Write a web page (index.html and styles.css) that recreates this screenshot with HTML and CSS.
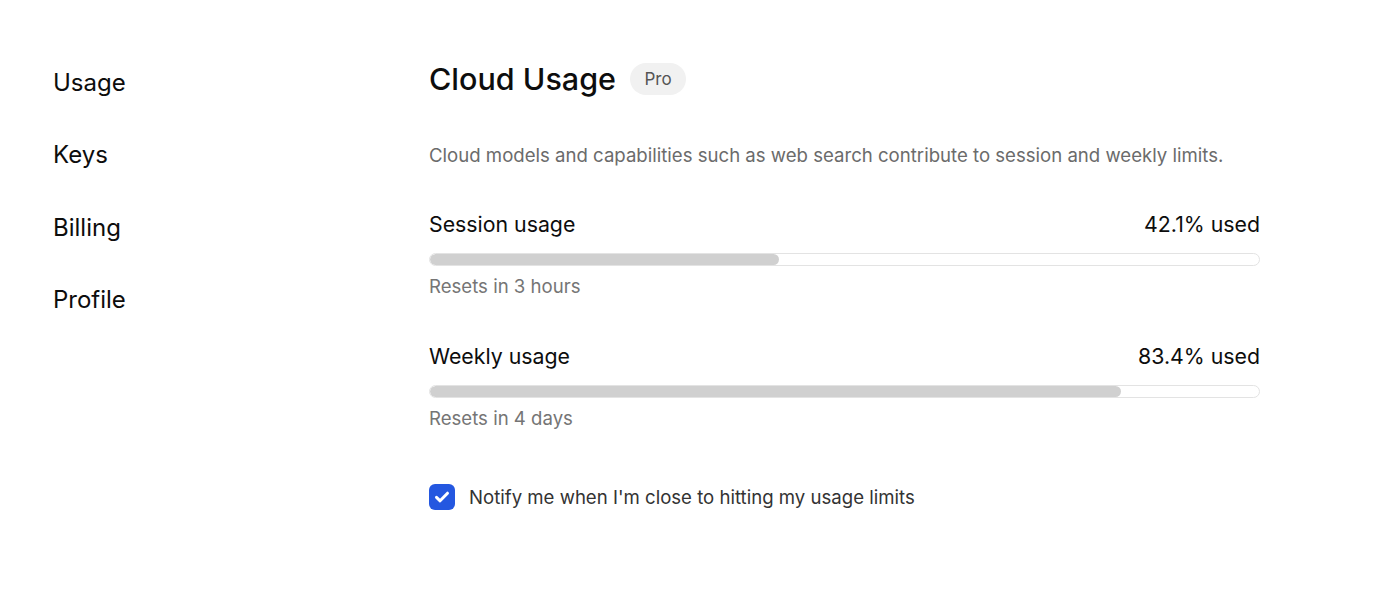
FILE: index.html
```html
<!DOCTYPE html>
<html lang="en">

<head>
    <meta charset="UTF-8">
    <meta name="viewport" content="width=device-width, initial-scale=1.0">
    <title>Settings - Usage</title>
    <link rel="stylesheet" href="styles.css">
</head>

<body>
    <div class="page">
        <nav class="sidebar">
            <a href="#" class="nav-item">Usage</a>
            <a href="#" class="nav-item">Keys</a>
            <a href="#" class="nav-item">Billing</a>
            <a href="#" class="nav-item">Profile</a>
        </nav>

        <main class="content">
            <div class="title-row">
                <h1>Cloud Usage</h1>
                <span class="badge">Pro</span>
            </div>
            <p class="description">Cloud models and capabilities such as web search contribute to session and weekly limits.</p>

            <div class="usage">
                <div class="usage-head">
                    <span>Session usage</span>
                    <span>42.1% used</span>
                </div>
                <div class="bar"><div class="bar-fill" style="width: 42.1%"></div></div>
                <div class="usage-reset">Resets in 3 hours</div>
            </div>

            <div class="usage">
                <div class="usage-head">
                    <span>Weekly usage</span>
                    <span>83.4% used</span>
                </div>
                <div class="bar"><div class="bar-fill" style="width: 83.4%"></div></div>
                <div class="usage-reset">Resets in 4 days</div>
            </div>

            <label class="notify">
                <span class="checkbox">
                    <svg width="20" height="20" viewBox="0 0 20 20"><path d="M4.5 10.4l3.6 3.4 7.4-7.6" fill="none" stroke="#fff" stroke-width="3" stroke-linecap="round" stroke-linejoin="round"/></svg>
                </span>
                Notify me when I'm close to hitting my usage limits
            </label>
        </main>
    </div>
</body>

</html>
```

FILE: styles.css
```css
* {
    margin: 0;
    padding: 0;
    box-sizing: border-box;
}
:root {
    --text: #0d0d0d;
    --muted: #6b6b6b;
    --track: #e3e3e3;
    --fill: #d0d0d0;
    --blue: #2457e0;
}
body {
    font-family: Inter, "Noto Sans", sans-serif;
    color: var(--text);
    background: #fff;
}
.page {
    display: flex;
    padding: 61px 0 0 53px;
}
.sidebar {
    width: 376px;
    display: flex;
    flex-direction: column;
    gap: 44.3px;
    padding-top: 8px;
}
.nav-item {
    font-size: 24px;
    line-height: 28px;
    color: var(--text);
    text-decoration: none;
}
.content {
    width: 831px;
}
.title-row {
    display: flex;
    align-items: center;
    gap: 14px;
    height: 36px;
}
.title-row h1 {
    font-size: 30.5px;
    font-weight: 500;
    line-height: 36px;
}
.badge {
    font-size: 17px;
    color: #555;
    background: #f1f1f1;
    border-radius: 16px;
    padding: 5px 14.5px;
    line-height: 22px;
}
.description {
    margin-top: 46px;
    font-size: 18.6px;
    line-height: 24px;
    color: var(--muted);
}
.usage {
    margin-top: 44px;
}
.usage + .usage {
    margin-top: 46px;
}
.usage-head {
    display: flex;
    justify-content: space-between;
    font-size: 21.3px;
    line-height: 26px;
}
.bar {
    margin-top: 16px;
    height: 13px;
    border: 1px solid var(--track);
    border-radius: 7px;
    overflow: hidden;
}
.bar-fill {
    height: 100%;
    background: var(--fill);
    border-radius: 7px;
}
.usage-reset {
    margin-top: 9px;
    font-size: 18.6px;
    line-height: 22px;
    color: #757575;
}
.notify {
    margin-top: 55px;
    display: flex;
    align-items: center;
    gap: 14px;
    font-size: 18.6px;
    line-height: 26px;
    color: #333;
}
.checkbox {
    width: 26px;
    height: 26px;
    border-radius: 6px;
    background: var(--blue);
    display: flex;
    align-items: center;
    justify-content: center;
}
```
